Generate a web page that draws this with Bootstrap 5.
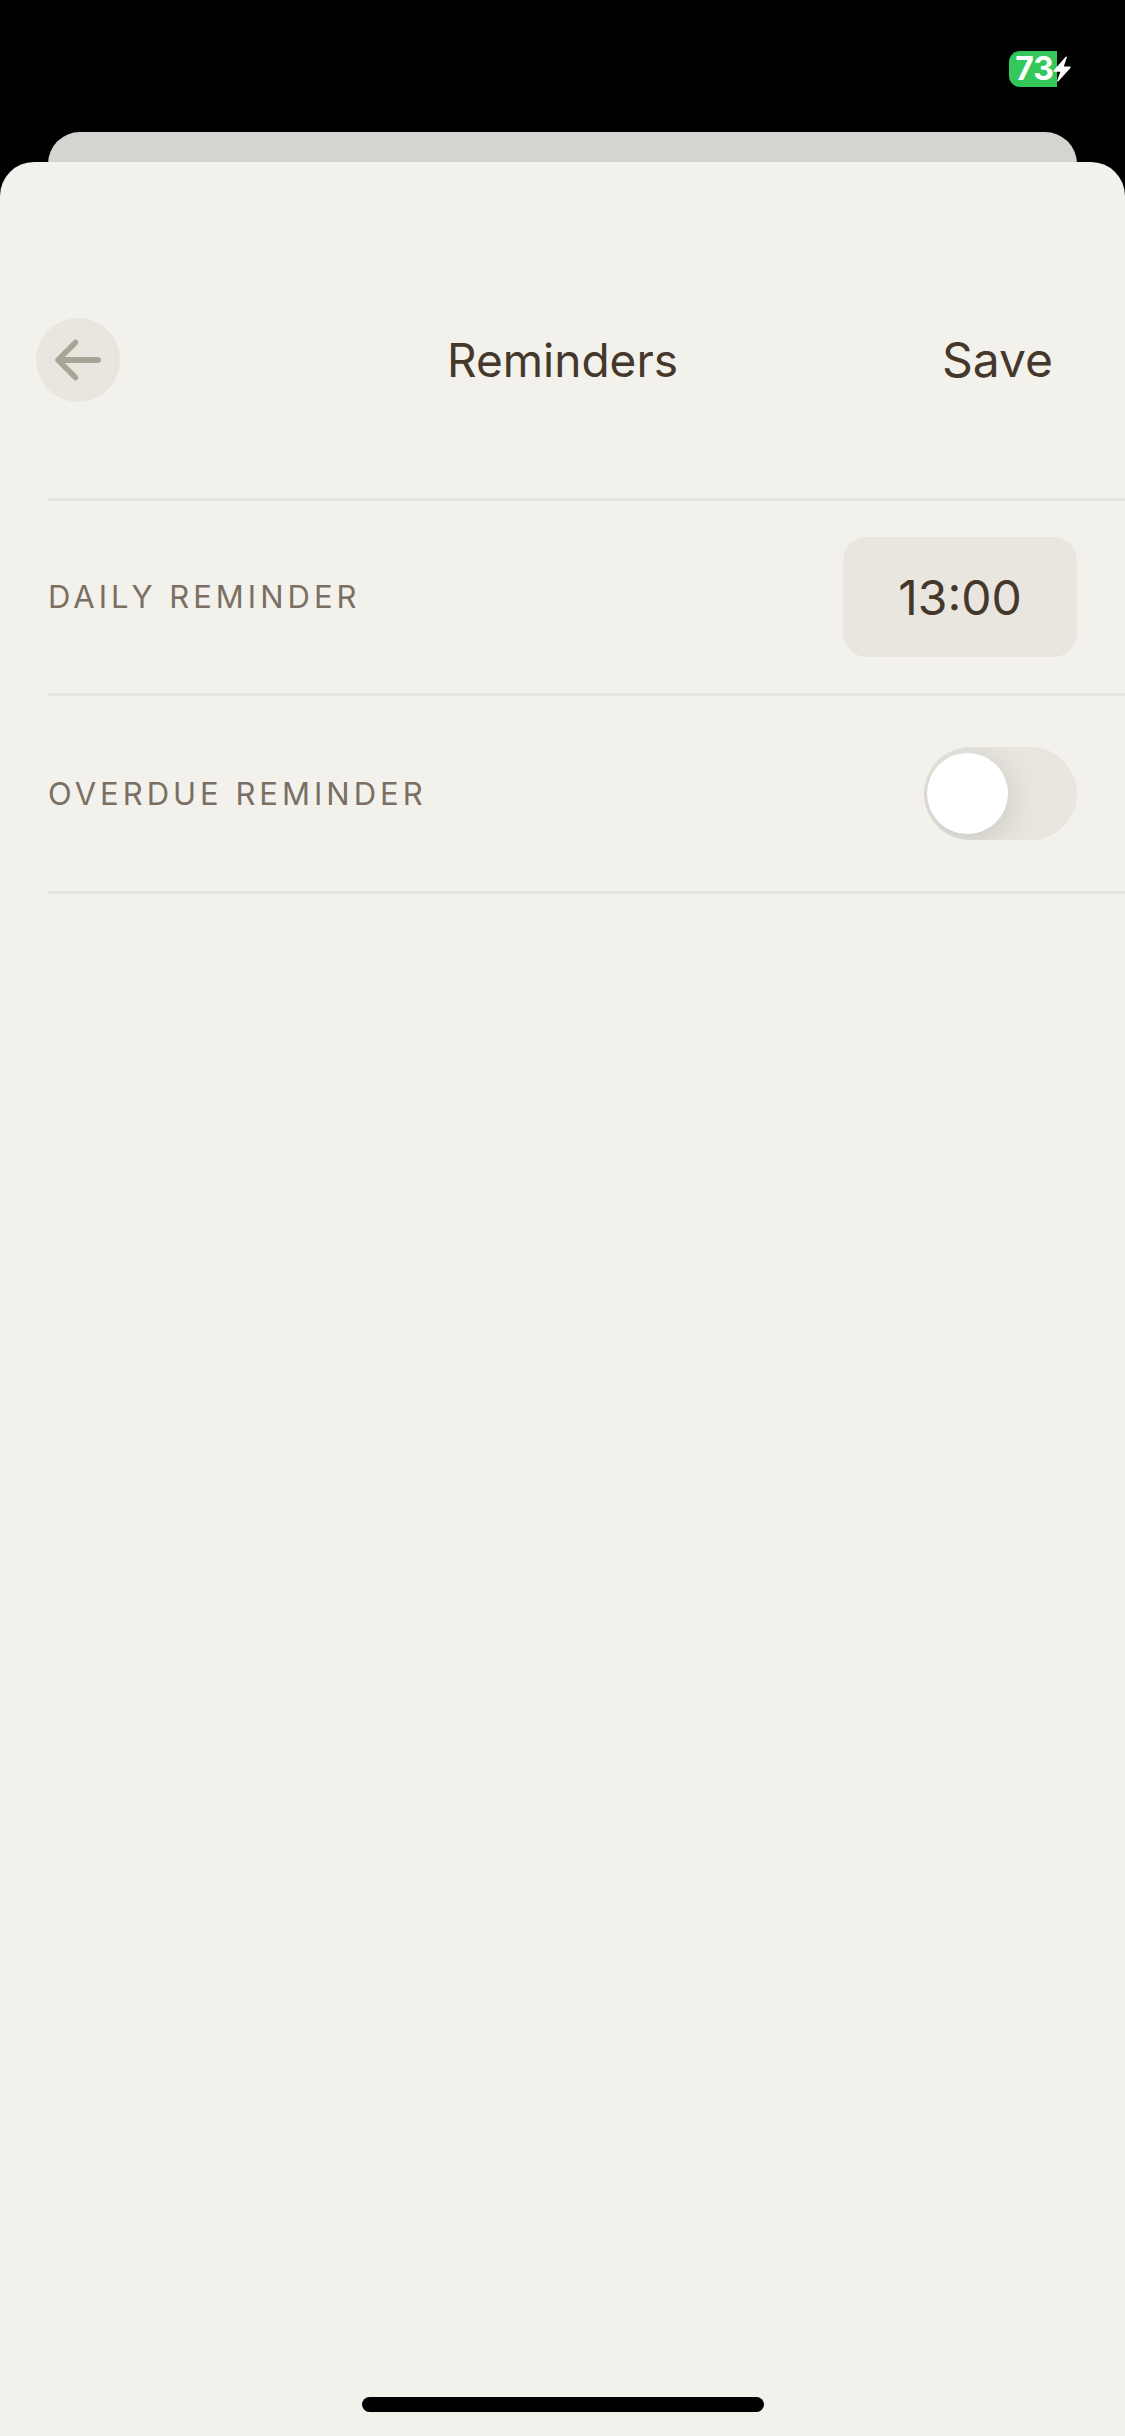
<!DOCTYPE html>
<html lang="en">
<head>
<meta charset="utf-8">
<meta name="viewport" content="width=device-width, initial-scale=1">
<title>Reminders</title>
<link href="https://cdn.jsdelivr.net/npm/bootstrap@5.3.0/dist/css/bootstrap.min.css" rel="stylesheet">
<style>
  :root { --paper: #f2f1ec; --sand: #e8e6df; --ink: #45382a; --rule: #e6e5e0; }
  body { font-family: Inter, "Liberation Sans", sans-serif; color: var(--ink); }
  .status-area { height: 132px; padding: 51px 53px 0 0; }
  .battery { height: 36px; }
  .battery-level { width: 48px; height: 36px; padding-left: 3px; background: #34c759; border-radius: 11px 0 0 11px; font-size: 32px; line-height: 36px; }
  .battery-bolt { width: 20px; height: 26px; margin-left: -5px; }
  .sheet-behind { height: 72px; margin: 0 48px -42px; background: #d6d4d0; border-radius: 32px 32px 0 0; }
  .sheet { background: var(--paper); border-radius: 34px 34px 0 0; padding-bottom: 24px; }
  .sheet-header { padding: 156px 36px 96px; }
  .back-button { width: 84px; height: 84px; background: var(--sand); color: #a9a495; }
  .sheet-title { font-size: 46px; line-height: 60px; font-weight: 400; }
  .save-button { padding: 0 36px; font-size: 48px; line-height: 60px; color: var(--ink); }
  .settings { margin-left: 48px; border-top: 3px solid var(--rule); }
  .setting { padding: 36px 48px 36px 0; border-bottom: 3px solid var(--rule); }
  .setting-label { font-size: 31px; line-height: 40px; letter-spacing: 4px; color: #7a6f62; }
  .time-field { width: 234px; height: 120px; border-radius: 24px; background: var(--sand); color: var(--ink); font-size: 48px; }
  .toggle-box { height: 123px; }
  .form-switch .form-check-input.toggle { position: relative; width: 153px; height: 93px; margin: 0; border: 0; border-radius: 47px; background: var(--sand); overflow: hidden; }
  .form-switch .form-check-input.toggle::before { content: ""; position: absolute; top: 6px; left: 3px; width: 81px; height: 81px; border-radius: 50%; background: #fff; box-shadow: 0 6px 36px rgba(0,0,0,.15); }
  .form-switch .form-check-input.toggle:checked { background: #34c759; }
  .form-switch .form-check-input.toggle:checked::before { left: 69px; }
  .home-indicator { width: 402px; height: 15px; }
</style>
<script src="https://cdn.jsdelivr.net/npm/bootstrap@5.3.0/dist/js/bootstrap.bundle.min.js"></script>
</head>
<body class="bg-black">
<div class="d-flex flex-column min-vh-100">
  <div class="status-area d-flex justify-content-end align-items-start">
    <div class="battery d-flex align-items-center">
      <span class="battery-level text-white text-center fw-bold">73</span>
      <svg class="battery-bolt position-relative" viewBox="0 0 20 26" aria-hidden="true"><path d="M13.5 1 1.8 14.2c-.7.8-.3 1.6.6 1.6h6L5.2 24.6c-.3 1 .6 1.3 1.2.6L18.4 12c.7-.8.3-1.6-.6-1.6h-6l3-8.8c.3-1-.7-1.300-1.300-.6Z" fill="#fff"/></svg>
    </div>
  </div>
  <div class="sheet-behind"></div>
  <main class="sheet position-relative flex-grow-1 d-flex flex-column">
    <header class="sheet-header row g-0 align-items-center">
      <div class="col d-flex">
        <button type="button" class="back-button btn border-0 rounded-circle p-0 d-flex align-items-center justify-content-center" aria-label="Back">
          <svg width="48" height="42" viewBox="0 0 48 42" fill="none" stroke="currentColor" stroke-linecap="round" stroke-linejoin="round" aria-hidden="true"><path d="M21.500 3.500 4 21l17.500 17.500" stroke-width="5.500"/><path d="M6 21h38" stroke-width="6"/></svg>
        </button>
      </div>
      <h1 class="sheet-title col-auto m-0">Reminders</h1>
      <div class="col d-flex justify-content-end">
        <button type="button" class="save-button btn border-0">Save</button>
      </div>
    </header>
    <form class="settings">
      <div class="setting d-flex align-items-center justify-content-between">
        <label class="setting-label text-uppercase" for="daily">Daily reminder</label>
        <input class="time-field form-control border-0 text-center p-0" id="daily" type="text" inputmode="numeric" value="13:00">
      </div>
      <div class="setting d-flex align-items-center justify-content-between">
        <label class="setting-label text-uppercase" for="overdue">Overdue reminder</label>
        <div class="toggle-box form-check form-switch p-0 m-0 d-flex align-items-center">
          <input class="toggle form-check-input" id="overdue" type="checkbox" role="switch">
        </div>
      </div>
    </form>
    <div class="home-indicator bg-black rounded-pill mt-auto mx-auto"></div>
  </main>
</div>
</body>
</html>
